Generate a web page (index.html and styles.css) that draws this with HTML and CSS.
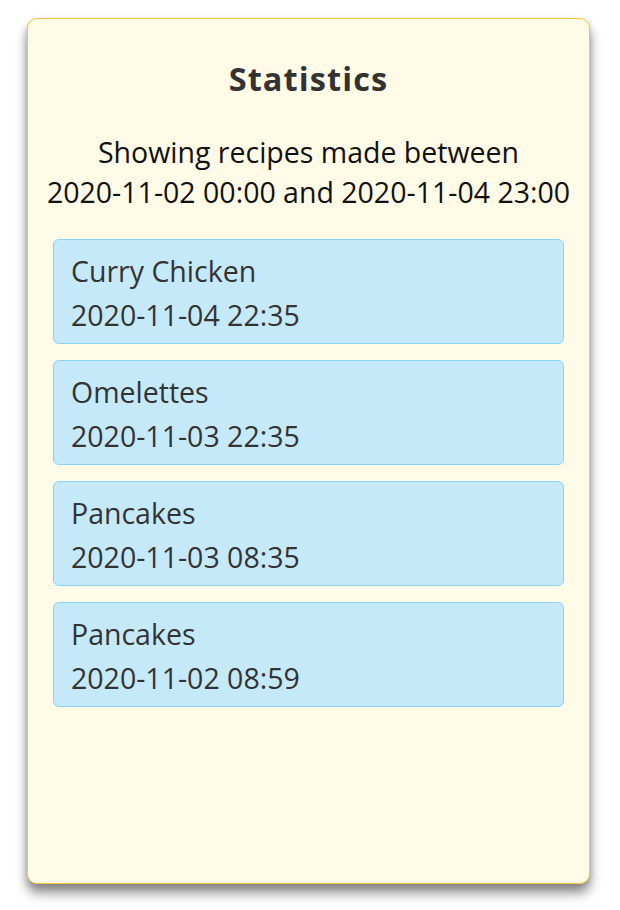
FILE: index.html
```html
<!DOCTYPE html>
<html>
<head>
<meta charset="utf-8">
<link rel="stylesheet" href="styles.css">
</head>
<body>
<div class="card">
  <h1 class="title">Statistics</h1>
  <p class="subtitle">Showing recipes made between<br>2020-11-02 00:00 and 2020-11-04 23:00</p>
  <ul class="list">
    <li class="item"><span>Curry Chicken</span><span>2020-11-04 22:35</span></li>
    <li class="item"><span>Omelettes</span><span>2020-11-03 22:35</span></li>
    <li class="item"><span>Pancakes</span><span>2020-11-03 08:35</span></li>
    <li class="item"><span>Pancakes</span><span>2020-11-02 08:59</span></li>
  </ul>
</div>
</body>
</html>
```

FILE: styles.css
```css
html, body {
  margin: 0;
  padding: 0;
  background: #ffffff;
}
body {
  font-family: "Source Sans Pro", "Open Sans", "Liberation Sans", sans-serif;
  color: #333333;
  padding: 18px 30px 26px 27px;
}
.card {
  box-sizing: border-box;
  height: 866px;
  background: #fffbe6;
  border: 1.5px solid #f5c542;
  border-radius: 10px;
  box-shadow: 0 9px 12px rgba(0, 0, 0, 0.45), 0 2px 6px rgba(0, 0, 0, 0.12);
  padding: 0 25px;
  display: flex;
  flex-direction: column;
}
.title {
  margin: 38px 0 0;
  text-align: center;
  font-size: 32.5px;
  font-weight: 700;
  line-height: 44px;
  letter-spacing: 1.1px;
  color: #333333;
}
.subtitle {
  margin: 31px -12px 0;
  text-align: center;
  font-size: 28.5px;
  line-height: 40px;
  color: #111111;
}
.list {
  list-style: none;
  margin: 27px 0 0;
  padding: 0;
  display: flex;
  flex-direction: column;
  gap: 16px;
}
.item {
  box-sizing: border-box;
  height: 105px;
  background: #c6e9fa;
  border: 1.5px solid #85d3f7;
  border-radius: 6px;
  padding: 9px 17px;
  display: flex;
  flex-direction: column;
  font-size: 28.5px;
  line-height: 44px;
  color: #333333;
}
```
